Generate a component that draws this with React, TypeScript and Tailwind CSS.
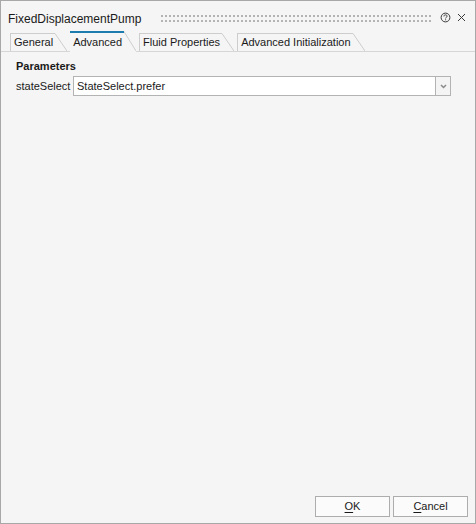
import React from 'react';

const tabs = [
  { id: 'general', label: 'General' },
  { id: 'advanced', label: 'Advanced' },
  { id: 'fluid', label: 'Fluid Properties' },
  { id: 'init', label: 'Advanced Initialization' },
];

// dotted drag handle in the title bar
const Grip = () => (
  <svg className="h-[8px] w-full" aria-hidden>
    <defs>
      <pattern id="grip" x="0" y="1" width="4" height="5" patternUnits="userSpaceOnUse">
        <rect x="0" y="0" width="2" height="2" fill="#b4b4b4" />
      </pattern>
    </defs>
    <rect x="0" y="1" width="100%" height="7" fill="url(#grip)" />
  </svg>
);

const HelpIcon = () => (
  <svg width="11" height="11" viewBox="0 0 11 11" aria-hidden>
    <circle cx="5.5" cy="5.5" r="4.4" fill="none" stroke="#3a3a3a" strokeWidth="1" />
    <path d="M3.9 4.4 C3.9 3.3 4.6 2.9 5.5 2.9 C6.4 2.9 7.1 3.4 7.1 4.2 C7.1 5.2 5.6 5.3 5.6 6.4" fill="none" stroke="#3a3a3a" strokeWidth="1" />
    <rect x="5.1" y="7.3" width="1" height="1" fill="#3a3a3a" />
  </svg>
);

const CloseIcon = () => (
  <svg width="9" height="9" viewBox="0 0 9 9" aria-hidden>
    <path d="M1 1 L8 8 M8 1 L1 8" stroke="#3a3a3a" strokeWidth="1" />
  </svg>
);

export default function App() {
  const active = 'advanced';

  return (
    <div className="w-[476px] h-[524px] flex flex-col border border-[#a8a8a8] bg-[#f5f5f5] text-[#1a1a1a] font-['Liberation_Sans',Arial,sans-serif]">
      {/* title bar */}
      <div className="flex h-[30px] pl-[7px] pr-[9px]">
        <span className="pt-[11px] text-[12px] leading-[14px] whitespace-nowrap">FixedDisplacementPump</span>
        <div className="flex-1 ml-[20px] mr-[7px] pt-[13px]">
          <Grip />
        </div>
        <div className="flex items-start gap-[6px] pt-[11px]">
          <HelpIcon />
          <div className="pt-[1px]">
            <CloseIcon />
          </div>
        </div>
      </div>

      {/* tabs */}
      <div className="flex items-end h-[21px] pl-[9px] border-b border-[#d6d6d6]">
        {tabs.map((tab) => {
          const isActive = tab.id === active;
          return (
            <div
              key={tab.id}
              className={`flex mr-[3px] ${isActive ? 'h-[21px] -mb-px relative z-10 bg-[#f5f5f5]' : 'h-[18px]'}`}
            >
              <div
                className={`text-[11px] leading-[13px] whitespace-nowrap pl-[3px] pr-[2px] ${
                  isActive ? 'border-t-2 border-[#1c7cae] pt-[3px]' : 'border-l border-t border-[#cdcdcd] pt-[2px]'
                }`}
              >
                {tab.label}
              </div>
              <svg width="12" height={isActive ? 21 : 18} className="shrink-0" aria-hidden>
                <line x1="0" y1="0.5" x2="12" y2={isActive ? 20 : 18} stroke="#cdcdcd" strokeWidth="1" />
              </svg>
            </div>
          );
        })}
      </div>

      {/* content */}
      <div className="flex-1 flex flex-col pl-[15px] pr-[24px] pt-[8px]">
        <div className="text-[11px] leading-[13px] font-bold">Parameters</div>
        <div className="flex items-center mt-[3px] h-[20px]">
          <span className="w-[57px] text-[11px] leading-[13px]">stateSelect</span>
          <div className="flex-1 flex h-[20px] border border-[#b3b3b3] bg-white">
            <span className="flex-1 pl-[3px] text-[11px] leading-[18px]">StateSelect.prefer</span>
            <div className="w-[15px] flex items-center justify-center border-l border-[#b3b3b3] bg-[#f4f4f4]">
              <svg width="7" height="5" viewBox="0 0 7 5" aria-hidden>
                <path d="M1 1 L3.5 3.5 L6 1" fill="none" stroke="#8a8a8a" strokeWidth="1.5" />
              </svg>
            </div>
          </div>
        </div>
      </div>

      {/* footer buttons */}
      <div className="flex justify-end gap-[3px] pr-[7px] pb-[6px]">
        <button className="w-[75px] h-[21px] border border-[#adadad] bg-[#fbfbfb] text-[11px] leading-[13px]">
          <span className="underline underline-offset-2">O</span>K
        </button>
        <button className="w-[75px] h-[21px] border border-[#adadad] bg-[#fbfbfb] text-[11px] leading-[13px]">
          <span className="underline underline-offset-2">C</span>ancel
        </button>
      </div>
    </div>
  );
}
